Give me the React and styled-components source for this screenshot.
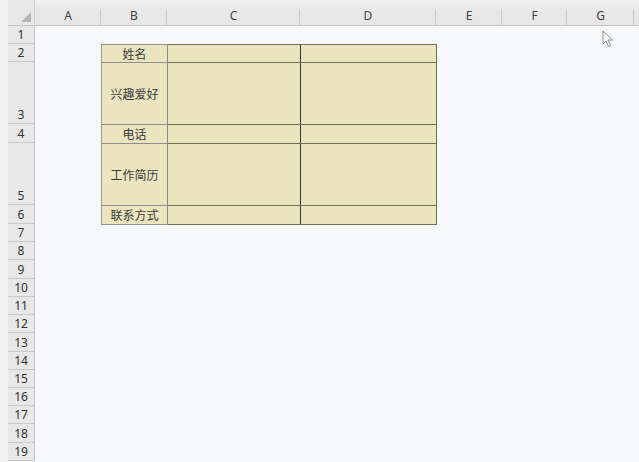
import React from "react";
import styled, { createGlobalStyle } from "styled-components";

const Global = createGlobalStyle`
  html, body { margin: 0; padding: 0; background: #f7f8fa; overflow: hidden; }
  body { font-family: "Noto Sans CJK SC", "Noto Sans", sans-serif; }
`;

const COLS = [
  { key: "A", w: 66 },
  { key: "B", w: 66 },
  { key: "C", w: 133 },
  { key: "D", w: 136 },
  { key: "E", w: 66 },
  { key: "F", w: 65 },
  { key: "G", w: 67 },
];

const ROWS = [18, 18, 62, 19, 62, 19, ...Array(13).fill(18.23)];

const Sheet = styled.div`
  position: relative;
  width: 639px;
  height: 462px;
  display: grid;
  grid-template-columns: 8px 27px ${COLS.map((c) => c.w + "px").join(" ")} 1fr;
  grid-template-rows: 26px ${ROWS.map((r) => r + "px").join(" ")} 1fr;
  background: #f7f8fa;
`;

const Gutter = styled.div`
  grid-column: 1;
  grid-row: 1 / -1;
  background: #f1f1f1;
`;

const Corner = styled.div`
  grid-column: 2;
  grid-row: 1;
  position: relative;
  background: #e8e8e8;
  border-bottom: 1px solid #c4c4c4;
  border-right: 1px solid #cfcfcf;
  box-sizing: border-box;
  &::after {
    content: "";
    position: absolute;
    right: 3px;
    bottom: 3px;
    width: 0;
    height: 0;
    border-left: 10px solid transparent;
    border-bottom: 10px solid #b5b5b5;
  }
`;

const ColHead = styled.div`
  grid-row: 1;
  background: linear-gradient(#f0f0f0 0, #e9e9e9 8px, #e6e6e6 100%);
  border-bottom: 1px solid #c4c4c4;
  box-sizing: border-box;
  display: flex;
  align-items: flex-end;
  justify-content: center;
  padding-bottom: 1px;
  font-family: "Noto Sans", "Open Sans", sans-serif;
  font-size: 12px;
  color: #444;
  position: relative;
  &::after {
    content: "";
    position: absolute;
    right: 0;
    top: 9px;
    bottom: 0;
    width: 1px;
    background: #cacaca;
  }
`;

const HeadFill = styled.div`
  grid-row: 1;
  grid-column: 10;
  background: linear-gradient(#f0f0f0 0, #e9e9e9 8px, #e6e6e6 100%);
  border-bottom: 1px solid #c4c4c4;
`;

const RowHead = styled.div`
  grid-column: 2;
  background: #e8e8e8;
  border-bottom: 1px solid #c9c9c9;
  border-right: 1px solid #c6c6c6;
  box-sizing: border-box;
  display: flex;
  align-items: flex-end;
  justify-content: center;
  font-family: "Noto Sans", "Open Sans", sans-serif;
  font-size: 12px;
  line-height: 16px;
  color: #333;
`;

const TableArea = styled.div`
  grid-column: 4 / 7;
  grid-row: 3 / 8;
`;

const Table = styled.table`
  border-collapse: collapse;
  table-layout: fixed;
  width: 335px;
  background: #ebe5bf;
  font-size: 12px;
  color: #3a3a3a;
`;

const Td = styled.td`
  padding: 0;
  height: ${(p) => p.$h}px;
  border-top: 1px solid ${(p) => (p.$dark ? "#727055" : "#8f8f8f")};
  border-bottom: 1px solid ${(p) => (p.$dark ? "#727055" : "#8f8f8f")};
  border-left: 1px solid ${(p) => p.$left || "#8f8f8f"};
  border-right: 1px solid ${(p) => p.$right || "#8f8f8f"};
  text-align: center;
  vertical-align: middle;
  line-height: 16px;
  white-space: nowrap;
`;

const TABLE_ROWS = [
  { label: "姓名", h: 17 },
  { label: "兴趣爱好", h: 61 },
  { label: "电话", h: 18 },
  { label: "工作简历", h: 61 },
  { label: "联系方式", h: 18 },
];

const Cursor = styled.svg`
  position: absolute;
  left: 602px;
  top: 30px;
  width: 12px;
  height: 18px;
`;

export default function App() {
  return (
    <>
      <Global />
      <Sheet>
        <Gutter />
        <Corner />
        {COLS.map((c, i) => (
          <ColHead key={c.key} style={{ gridColumn: i + 3 }}>
            {c.key}
          </ColHead>
        ))}
        <HeadFill />
        {ROWS.map((r, i) => (
          <RowHead key={i} style={{ gridRow: i + 2 }}>
            {i + 1}
          </RowHead>
        ))}
        <TableArea>
          <Table>
            <colgroup>
              <col style={{ width: 66 }} />
              <col style={{ width: 133 }} />
              <col style={{ width: 136 }} />
            </colgroup>
            <tbody>
              {TABLE_ROWS.map((r, i) => (
                <tr key={i}>
                  <Td $h={r.h} $left="#9a9a9a" $right="#8a8a8a">
                    {r.label}
                  </Td>
                  <Td $h={r.h} $dark $right="#3b3a30" $left="#8a8a8a" />
                  <Td $h={r.h} $dark $left="#3b3a30" $right="#6c6b4c" />
                </tr>
              ))}
            </tbody>
          </Table>
        </TableArea>
        <Cursor viewBox="0 0 12 18">
          <path
            d="M1 1 L1 14 L4 11 L6.5 16.5 L8.5 15.5 L6 10 L10.5 10 Z"
            fill="#fff"
            stroke="#8a8a8a"
            strokeWidth="1"
            strokeLinejoin="round"
          />
        </Cursor>
      </Sheet>
    </>
  );
}
